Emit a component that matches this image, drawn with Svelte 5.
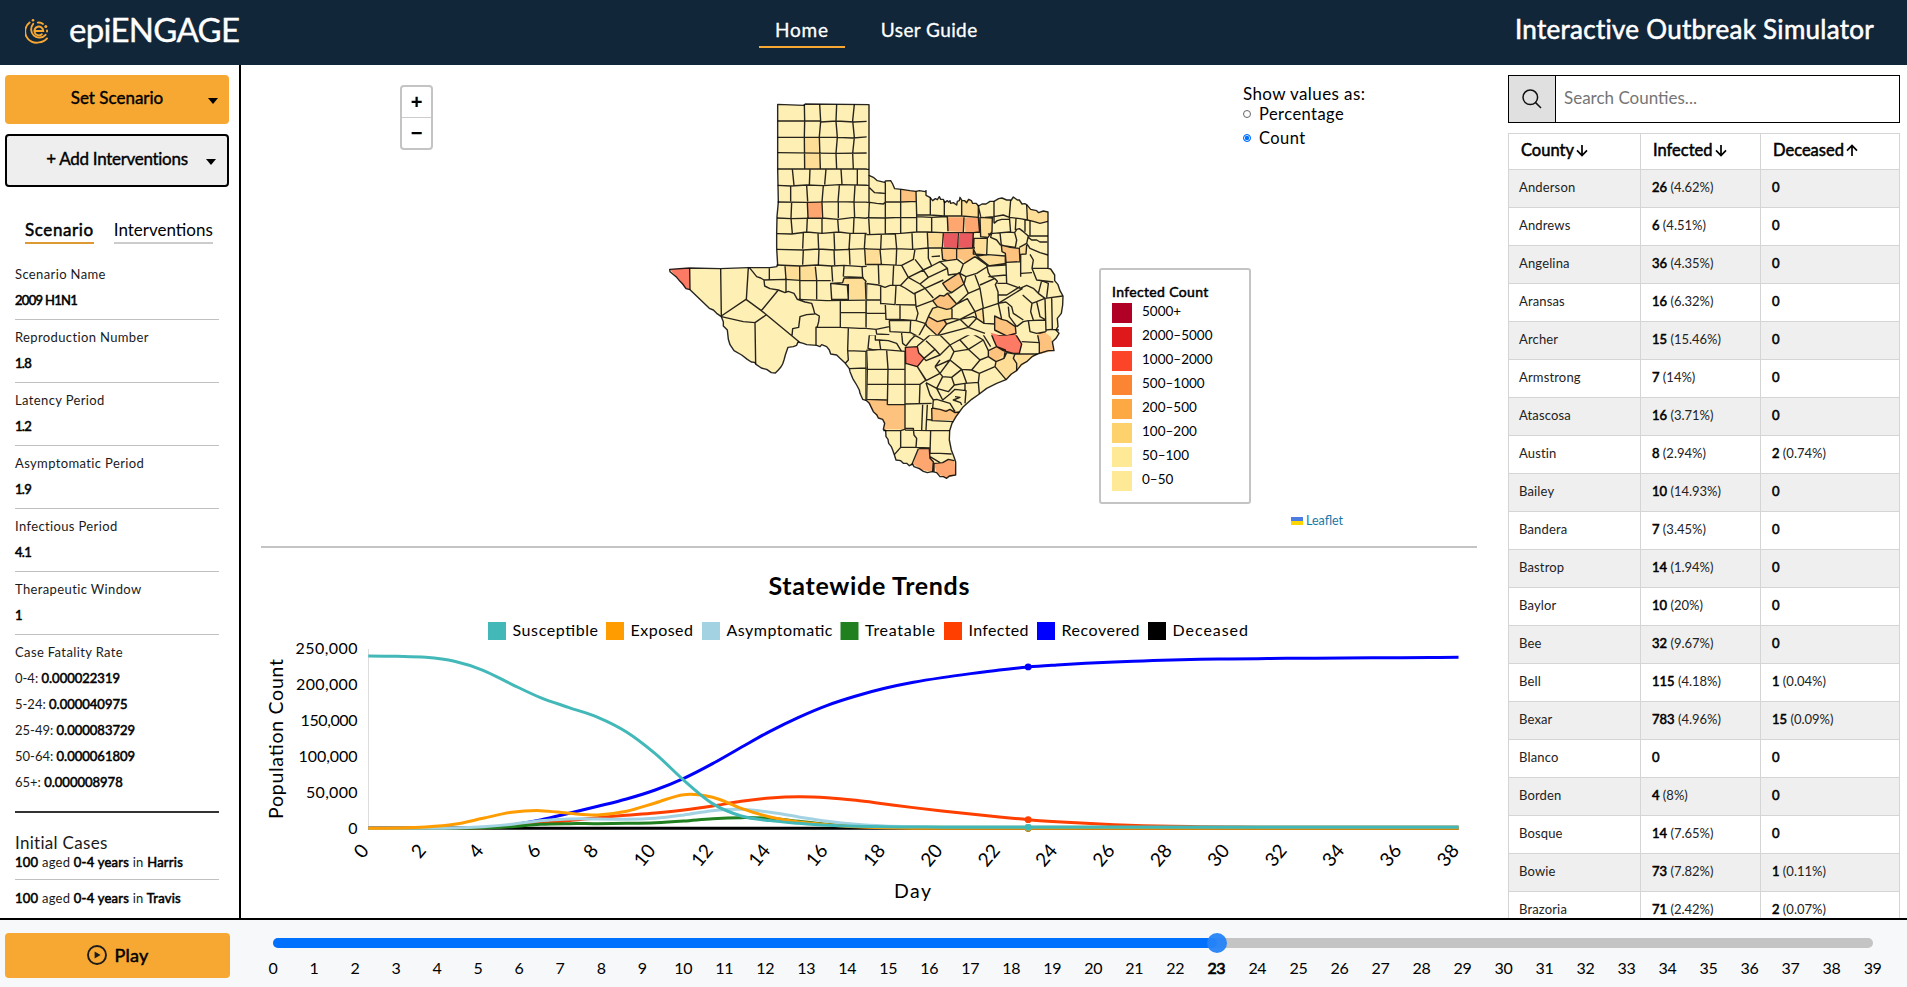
<script>
  const params = [
    ['Scenario Name', '2009 H1N1'],
    ['Reproduction Number', '1.8'],
    ['Latency Period', '1.2'],
    ['Asymptomatic Period', '1.9'],
    ['Infectious Period', '4.1'],
    ['Therapeutic Window', '1']
  ];
  const fatality = [
    ['0-4', '0.000022319'],
    ['5-24', '0.000040975'],
    ['25-49', '0.000083729'],
    ['50-64', '0.000061809'],
    ['65+', '0.000008978']
  ];
  const initial = ['Harris', 'Travis'];
  const counties = [
    ['Anderson', '26', '(4.62%)', '0', ''],
    ['Andrews', '6', '(4.51%)', '0', ''],
    ['Angelina', '36', '(4.35%)', '0', ''],
    ['Aransas', '16', '(6.32%)', '0', ''],
    ['Archer', '15', '(15.46%)', '0', ''],
    ['Armstrong', '7', '(14%)', '0', ''],
    ['Atascosa', '16', '(3.71%)', '0', ''],
    ['Austin', '8', '(2.94%)', '2', '(0.74%)'],
    ['Bailey', '10', '(14.93%)', '0', ''],
    ['Bandera', '7', '(3.45%)', '0', ''],
    ['Bastrop', '14', '(1.94%)', '0', ''],
    ['Baylor', '10', '(20%)', '0', ''],
    ['Bee', '32', '(9.67%)', '0', ''],
    ['Bell', '115', '(4.18%)', '1', '(0.04%)'],
    ['Bexar', '783', '(4.96%)', '15', '(0.09%)'],
    ['Blanco', '0', '', '0', ''],
    ['Borden', '4', '(8%)', '0', ''],
    ['Bosque', '14', '(7.65%)', '0', ''],
    ['Bowie', '73', '(7.82%)', '1', '(0.11%)'],
    ['Brazoria', '71', '(2.42%)', '2', '(0.07%)']
  ];
  const legend = [
    ['#b10026', '5000+'],
    ['#df181b', '2000–5000'],
    ['#fc4528', '1000–2000'],
    ['#fc8534', '500–1000'],
    ['#fda943', '200–500'],
    ['#fdd16c', '100–200'],
    ['#feea96', '50–100'],
    ['#feea96', '0–50']
  ];
  const days = Array.from({ length: 40 }, (_, i) => i);
  const today = 23;

  // State outline, in map units (three per pixel).
  const outline =
    'M353,43 L432,46 436,42 627,44 627,256 640,262 652,272 674,277 676,273 692,272 698,282 704,296 725,298 750,302 768,304 778,302 796,305 798,302 798,316 810,322 818,332 826,326 832,329 838,320 842,328 850,328 854,338 862,332 866,336 870,332 872,340 880,338 890,345 892,334 898,332 900,322 906,332 914,332 920,338 926,328 934,332 938,340 948,340 956,348 966,342 978,342 990,334 1002,334 1016,326 1026,324 1040,330 1054,330 1060,321 1072,330 1078,330 1086,342 1094,341 1100,344 1112,358 1130,362 1136,368 1150,363 1164,366 1164,535 1172,537 1184,555 1184,572 1194,584 1200,602 1209,618 1208,645 1204,670 1192,685 1194,710 1188,720 1197,730 1188,745 1177,755 1182,782 1165,782 1132,792 1116,800 1100,815 1084,824 1070,842 1054,852 1038,869 1010,880 980,895 958,912 935,928 910,950 898,966 888,980 876,1000 869,1022 868,1050 874,1080 881,1098 887,1115 887,1155 868,1158 860,1165 850,1160 840,1160 830,1148 817,1145 802,1148 790,1144 778,1136 762,1130 758,1122 748,1127 740,1120 730,1120 722,1112 708,1110 703,1094 698,1080 694,1070 686,1060 684,1048 678,1040 677,1022 670,1018 674,1000 668,988 655,984 650,974 640,965 628,940 620,932 608,928 600,910 598,900 590,885 582,872 578,865 570,845 568,836 556,820 540,805 530,795 512,792 508,780 500,770 485,764 480,770 470,766 440,764 430,760 414,756 410,766 400,770 384,772 376,795 372,810 368,822 362,832 355,840 346,849 334,848 320,838 304,834 288,823 284,817 274,816 262,808 245,795 222,782 210,764 205,748 202,720 190,708 190,695 184,680 170,670 160,660 148,655 90,599 78,596 68,582 60,574 50,562 30,545 29,538 88,534 180,536 265,533 330,533 350,530 353,525 350,475 350,430 351,380 355,336 353,237 Z';

  // Shaded counties: [colour, points]
  const shaded = [
    ['#fedd97', '434,142 478,142 480,188 434,188'],
    ['#fedd97', '434,189 480,189 480,236 434,236'],
    ['#fda66f', '442,337 486,337 484,383 444,383'],
    ['#fd7b65', '29,538 88,534 89,598 78,596 50,562'],
    ['#fedd97', '377,526 419,528 418,568 380,568'],
    ['#fedd97', '421,528 466,530 468,570 421,570'],
    ['#fedd97', '552,564 612,565 617,628 567,628 564,582 550,580'],
    ['#fdc27d', '725,298 750,302 768,304 768,334 725,334'],
    ['#fedd97', '906,332 926,328 938,340 955,348 955,382 905,378'],
    ['#fedd97', '1103,344 1112,358 1136,368 1150,363 1164,366 1164,394 1140,400 1120,394 1102,392'],
    ['#fda66f', '864,382 911,382 908,426 862,424'],
    ['#fda66f', '914,383 955,383 959,428 916,426'],
    ['#fedd97', '961,383 997,384 996,425 984,442 963,440'],
    ['#e85a5f', '851,430 892,430 892,474 852,472'],
    ['#e85a5f', '898,430 940,429 938,473 895,473'],
    ['#fedd97', '802,430 849,430 846,474 806,468'],
    ['#fdc27d', '847,476 889,476 888,508 862,512 845,506'],
    ['#fdc27d', '893,476 938,474 945,500 915,523 908,510 893,504'],
    ['#fedd97', '943,446 979,446 976,494 941,490'],
    ['#fedd97', '951,498 1036,498 1036,525 988,528 982,518'],
    ['#fdc27d', '1024,464 1044,474 1078,476 1080,514 1038,517 1037,490 1026,485'],
    ['#fedd97', '1083,472 1098,462 1104,476 1098,492 1082,492'],
    ['#fedd97', '615,478 658,478 658,524 617,524'],
    ['#fedd97', '600,570 614,580 616,626 600,626'],
    ['#fdc27d', '848,580 898,548 912,582 875,606 862,602'],
    ['#fdc27d', '818,632 840,616 852,618 862,610 876,624 888,640 872,656 860,658 832,650'],
    ['#fedd97', '806,670 818,652 840,652 876,664 878,682 862,696 850,690 832,692 810,676'],
    ['#fdc27d', '797,698 806,678 832,694 852,690 860,702 832,736 800,708'],
    ['#fedd97', '945,665 966,655 972,700 950,684'],
    ['#fdc27d', '1004,678 1026,688 1042,692 1065,712 1066,728 1038,736 1004,724'],
    ['#fd7b65', '992,728 1020,736 1038,736 1064,728 1086,762 1078,790 1060,790 1030,782 1010,770 1002,752'],
    ['#fdc27d', '985,782 1010,770 1036,780 1032,805 1008,815 985,800'],
    ['#fedd97', '1008,815 1034,790 1060,795 1070,810 1070,842 1038,869 1005,830'],
    ['#fedd97', '1065,792 1132,792 1100,815 1070,842 1072,812'],
    ['#fdc27d', '1132,730 1152,725 1172,740 1177,755 1182,782 1140,792 1138,758'],
    ['#fd7b65', '736,772 772,770 776,788 792,805 772,832 737,820'],
    ['#fdc27d', '620,930 680,930 682,944 734,945 734,1018 672,1018 672,990 655,984 640,965'],
    ['#fdc27d', '816,954 840,958 885,960 898,968 880,990 816,990'],
    ['#fda66f', '776,1076 808,1076 810,1098 820,1115 818,1145 785,1140 760,1122'],
    ['#fda66f', '822,1120 848,1118 865,1108 883,1112 887,1155 860,1165 830,1150']
  ];

  // County boundaries grouped by map tile: [clip id, clip rect, dx, dy, path]
  const borders = [
    ['nw', [0, 0, 620, 526], 0, 0, 'M353,93H480L482,96 530,93 581,96 627,94 M353,142L530,142 578,144 627,140 M353,188L530,190 627,189 M353,237L592,237 627,237 M433,43L434,92 433,142 434,237 M479,43L482,94 478,140 481,237 M530,43L528,94 532,142 528,190 530,237 M583,43L578,92 583,142 578,190 580,237 M397,237L402,286 M450,237L448,286 M498,237L494,284 M543,237L546,284 M592,237V284 M353,286L392,288 440,285 490,287 540,284 627,286 M392,287L392,334 M440,286L443,334 M490,287L486,336 M538,287L534,336 M585,286L582,336 M353,336L442,337 535,335 582,336 660,337 M395,336L393,384 M442,337L444,384 M486,337L488,384 M535,336V384 M582,336L584,384 M351,384L393,386 486,384 535,388 582,382 627,385 M393,384L397,431 M442,384L440,428 M486,384V430 M533,386L536,426 M582,384L580,430 M351,431L395,432 440,426 486,430 536,426 570,430 614,430 660,430 M430,430L428,476 M474,430L476,478 M522,430L524,478 M570,430L567,478 M616,430L613,476 M351,478L430,480 476,477 524,480 570,478 614,476 660,476 M430,480L428,524 M477,478L475,525 M522,478L524,525 M568,478L570,524 M614,477L617,525'],
    ['sw', [0, 522, 620, 660], 0, 450, 'M328,85V118 M375,78L378,118V155 M419,78L420,178 M466,80L470,120 470,178 M350,75L420,78 470,75 515,78 552,76 606,80 660,76 M515,78L518,125 M552,78L550,110 M606,78L608,115 M552,110L606,112 M310,120L375,118 420,121 512,122 M268,83L278,95 290,110 302,114 312,120 314,138 330,146 355,150 375,158 385,154 402,160 412,178 435,186 455,190 460,205 464,220 478,228 476,245 472,260 468,262V315 M415,178L500,182 640,180 M512,130L515,178 565,178 562,135 Z M512,130L548,128 552,114 612,114 M565,178V132 M616,125L618,178 M606,112L620,126 M89,85L90,149 M182,87L184,228 M265,83L259,178 M184,228L258,178 304,212 355,150 M304,212L418,306 M184,230L250,245 285,248 318,225 M285,248L287,373 M464,222L440,224 420,230 416,262 398,266 396,288 M466,262L541,262 600,265 660,265 M541,180V262 M541,218L618,218 660,219 M618,180V262 M565,265L563,330 565,360 556,370 M565,332L618,334 660,330 M618,334V482 M568,386L618,384 660,387'],
    ['ne', [619, 200, 620, 536], 600, 210, 'M0,28H27 M0,76H27 M27,82L44,98 60,99 74,100 M27,46V127 M28,127L26,173 29,222 M76,67V222 M122,88V222 M168,94L170,163V215 M0,127H30L50,130 70,132 76,126 122,126 168,124 M0,173L76,174 122,172 168,173 M170,165L211,165 252,168 305,168 355,172 M211,112V165 M253,122V168 M305,122V170 M355,135V172 M170,170L215,172 262,170 M215,170V215 M262,170L264,214 M312,172L310,216 M355,172L359,218 M360,172L397,174 396,215 384,232 362,230Z M0,222L27,224 76,222 122,220 170,216 202,216 250,218 340,218 360,216 M250,220L247,264 M295,220L293,264 M340,219L338,262 M202,218L204,262 M64,222L62,266 M106,222L110,266 M156,220L158,266 M0,266L62,268 108,266 158,268 205,264 247,264 295,266 345,264 M342,235H382L380,285 340,282 Z M338,262L350,288 M350,288L384,284 436,288 436,315 388,318 352,290 M424,255L450,262 478,265 480,305 438,307 436,280 426,275Z M60,268L64,312 M110,268L108,316 M0,314L60,313 125,316 M55,316L57,372 M101,316L98,378 M402,124V170L402,190 M452,120L448,170 452,218 M500,134L502,178 M355,138L362,170 M375,172L402,170 430,165 448,172 480,176 502,180 520,184 540,190 564,184 M402,190L412,182 425,178 448,178 M468,175L466,210 M495,178V215 M510,184V226 M384,222L400,220 448,216 464,218 470,208 478,206 490,215 505,228 564,228 M396,215L392,232 410,240 422,256 M420,218L424,256 M464,218L470,240 466,262 426,256 M505,228L500,250 478,262 M505,232L515,240 530,240 540,246 562,246 M500,250L510,265 540,278 564,285 M500,255L498,282 482,283 V350 M510,283L520,300 516,325 530,360 580,366 M484,340L516,338 M516,325H564 M245,266L248,298 262,302 M290,266V298L262,302 M292,298L310,312 345,290 M165,268L160,298 125,316 145,352 190,330 165,298 M145,352L120,378 M145,352L180,372 205,352 190,330 M190,330L215,318 205,295 205,265 M215,318L240,305 262,302 M205,352L262,325 M240,305L262,325 265,345 300,340 310,312 M215,290L240,288 M300,340L318,350 350,340 M180,372L195,385 250,360 M160,402L195,385 220,414 M248,370L298,338 312,372 275,398 262,390 Z M318,350L312,372 325,400 360,385 345,345 M360,375L405,355 M345,290L380,315 385,338 392,350 405,356 412,364 406,374 414,395 415,430 M350,340L385,318 438,310 440,370 480,385 M412,370L440,370 M385,350L438,345 M165,400L168,440 174,460 168,482 M218,422L240,406 252,408 262,400 290,432 272,446 260,448 232,440Z M170,440L218,422 M262,400L275,398 M290,432L325,400 M360,385L370,445 M290,432L322,416 345,455 300,478 M205,470L218,445 235,440 M278,475L250,480 M276,446V475L300,478 M197,490L205,470 232,485 252,480 260,492 232,527 200,498Z M345,455L368,445 372,490 350,475Z M370,445L415,430 414,405 440,405 480,380 M415,430L488,385 M438,426L455,440 460,460 490,480 M480,385L500,376 520,385 535,400 555,415 M545,362L535,400 M545,362L565,370 560,412 M555,415L558,515 M575,412L577,508 M555,415L608,408 M488,405L516,430 530,425 555,415 M516,430L512,455 520,480 M530,425L540,470 558,480 M505,482L510,515 530,520 558,515 M505,482L556,480 M470,500L490,485 505,482 M445,440L448,470 470,500 M538,520L558,515 M558,510L575,508 597,510 M372,490L404,492 M404,468L425,478 440,482 466,500 468,520 440,528 404,510 Z M438,426L415,430 425,478 M0,368L55,375 75,382 90,376 120,376 135,384 160,400 M20,370L18,505 M0,420H62L62,380 M62,430L105,434 108,378 M108,434L168,435 M76,435L78,478 M120,436V478 M62,420V433 M16,460L78,460 M76,478L120,478 168,482 M88,482L90,515 150,518 152,482Z M18,505L48,508 88,500 M48,508L50,522 88,524 M125,518V545 M168,482L195,490 M152,518L175,530 197,490 M260,492L300,478 M300,478L340,470 350,475 M300,478L325,502 M350,475L325,502 375,520 M232,527L325,502'],
    ['se', [619, 736, 620, 460], 540, 690, 'M78,22L110,25 110,35 150,38 M80,92L82,146 80,240 M22,92L90,90 122,88 195,94 M140,92L144,146 142,254 M28,146L80,148 195,148 M80,193L195,193 M80,238L140,240 M195,92V330 M142,254H195 M195,252L275,250 M88,45L84,85 100,90 122,88 118,60 106,60 106,44Z M118,60L145,62 170,70 185,95 M153,36L210,40 M185,40L188,70 198,78 M232,40L212,60 198,78 M196,82L232,80 236,98 252,115 232,140 197,130Z M210,40L232,50 250,60 M232,78L270,45 M195,193L240,193 258,180 232,140 M240,193L238,252 M258,188L270,225 280,240 M248,254L245,330 M262,254L258,330 M258,298L275,300 M275,264L276,302 340,305 M276,264L300,268 318,274 330,268 345,278 358,276 M194,328L182,332H130 M195,330L270,332H330 M272,332L270,400 300,400 335,402 M182,332L182,382 228,382 270,384 M195,325H220L222,345 230,355 228,382 M182,382L163,404 M235,386L215,435 M236,386H268L270,415 280,425 278,455 M282,455V430L308,428 325,418 343,422 M270,410L300,428 M280,240L290,238 310,244 330,250 345,275 M280,240L278,264 M258,188L290,205 308,240 M290,205L308,170 335,172 343,195 325,215 290,205 M308,240L330,222 345,208 378,212 375,250 M345,230L360,232 340,240 362,248 365,255 M343,195L375,190 415,187 418,222 M375,190V212 M252,115L285,88 258,62 M285,88L300,105 330,75 300,45 M232,140L258,182 300,160 285,140 M252,115L258,122 300,105 M300,120L285,140 M285,140L330,120 M308,170L300,160 330,120 365,148 335,172 M330,75L342,95 330,120 M342,95L385,88 420,120 395,150 365,148 M385,88L360,60 M365,148L380,190 M395,150L418,160 415,187 M418,160L465,140 M420,120L445,110 M330,75L395,40 M395,40L430,60 445,92 M385,88L430,60 M452,38L480,46 498,45 524,38 545,72 538,100 520,100 490,92 470,80 462,62Z M445,92L470,80 496,90 492,115 468,125 445,110Z M468,125L465,140 498,179 M492,115L500,98 525,102 520,115 530,130V152 M525,102L592,102 M545,65L598,68V100 M592,40L598,70 M430,45L452,80 M270,45L300,45']
  ];

  // Chart geometry and series, sampled once per day.
  const X0 = 368.3;
  const STEP = 28.69;
  const base = 805;
  const pad = (a, last) => Array.from({ length: 39 }, (_, i) => (i < a.length ? a[i] : last));
  const series = [
    ['Deceased', '#000000', pad([], 805)],
    ['Recovered', '#0000ff', pad([805, 805, 805, 805, 804, 795, 780, 760, 739, 717, 690, 655, 611, 562, 514, 472, 436, 408, 385, 367, 353, 341, 330, 321, 315, 310, 306, 303, 300, 298, 297, 296, 295, 294.5, 294, 293.5, 293, 292.5, 292], 292)],
    ['Infected', '#ff3f00', pad([805, 805, 805, 805, 804, 798, 790, 782, 773, 766, 759, 750, 738, 724, 714, 710, 713, 721, 732, 743, 753, 762, 771, 779, 785, 790, 794, 797, 799, 800, 801], 802)],
    ['Treatable', '#208020', pad([805, 805, 805, 805, 804, 800, 793, 791, 791, 790, 788, 783, 776, 773, 775, 784, 793, 799, 801], 802)],
    ['Asymptomatic', '#a3d3e2', pad([805, 805, 805, 804, 800, 793, 782, 777, 777, 778, 775, 765, 752, 748, 757, 771, 784, 793, 798, 800], 802)],
    ['Exposed', '#ff9c00', pad([805, 804, 801, 793, 775, 757, 752, 760, 765, 754, 729, 704, 712, 745, 771, 786, 794, 800, 803, 804.5], 805)],
    ['Susceptible', '#43b8b8', pad([288, 289, 292, 304, 331, 373, 413, 443, 472, 516, 581, 661, 731, 768, 782, 790, 796, 799, 800.5, 801], 802)]
  ];
  const px = (d) => X0 + d * STEP;
  const py = (v) => 828.3 - (base - v) / 3;
  function curve(vals) {
    let d = `M${px(0)},${py(vals[0])}`;
    for (let i = 0; i < vals.length - 1; i++) {
      const a = vals[Math.max(0, i - 1)];
      const b = vals[i];
      const c = vals[i + 1];
      const e = vals[Math.min(vals.length - 1, i + 2)];
      d += ` C${px(i + 1 / 3)},${py(b + (c - a) / 6)} ${px(i + 2 / 3)},${py(c - (e - b) / 6)} ${px(i + 1)},${py(c)}`;
    }
    return d;
  }
  const chartLegend = [
    [488, 'Susceptible', '#43b8b8', 85.5],
    [606, 'Exposed', '#ff9c00', 62.5],
    [702, 'Asymptomatic', '#a3d3e2', 106],
    [840.5, 'Treatable', '#208020', 70],
    [944, 'Infected', '#ff3f00', 60],
    [1037, 'Recovered', '#0000ff', 78],
    [1148, 'Deceased', '#000000', 75.5]
  ];
  const yTicks = [
    ['250,000', 62],
    ['200,000', 61.5],
    ['150,000', 57],
    ['100,000', 59],
    ['50,000', 51.5],
    ['0', 9.5]
  ];
  const xTicks = Array.from({ length: 20 }, (_, i) => i * 2);
</script>

<div class="app">
  <header>
    <div class="brand">
      <svg width="24" height="26" viewBox="0 0 24 26" fill="none" stroke="#f6a833" stroke-width="1.9" stroke-linecap="round">
        <path d="M4.6,4.6 A11.2,11.2 0 0 0 14,24.4 Q19,24 22,20.4" />
        <path d="M8.2,5.8 A8.2,8.2 0 1 0 20.6,16.8" />
        <path d="M12.8,4.6 Q15.8,4.2 18,6" />
        <path d="M10,12.9 H18.2 A4.4,4.4 0 1 0 16.8,16.2" stroke-width="2" />
        <circle cx="8" cy="2.2" r="1.3" fill="#f6a833" stroke="none" />
        <circle cx="20.8" cy="8.4" r="1.5" fill="#f6a833" stroke="none" />
        <path d="M22,12.4 V13.6" />
      </svg>
      <span class="name">epiENGAGE</span>
    </div>
    <nav>
      <a class="on" href="#home">Home</a>
      <a href="#guide">User Guide</a>
    </nav>
    <div class="title">Interactive Outbreak Simulator</div>
  </header>

  <div class="body">
    <aside class="left">
      <button class="menu primary"><span>Set Scenario</span><i></i></button>
      <button class="menu secondary"><span>+ Add Interventions</span><i></i></button>
      <div class="tabs">
        <span class="tab on">Scenario</span>
        <span class="tab">Interventions</span>
      </div>
      <div class="info">
        {#each params as [label, value]}
          <div class="param"><div>{label}</div><b>{value}</b></div>
        {/each}
        <div class="fatal">
          <div class="fatal-title">Case Fatality Rate</div>
          {#each fatality as [age, rate]}
            <div>{age}: <b>{rate}</b></div>
          {/each}
        </div>
        <div class="cases-title">Initial Cases</div>
        {#each initial as place}
          <div class="case"><b>100</b> aged <b>0-4 years</b> in <b>{place}</b></div>
        {/each}
      </div>
    </aside>

    <main>
      <section class="map">
        <svg class="texas" width="402" height="396" viewBox="0 0 1206 1188">
          <defs>
            {#each borders as [id, [x, y, w, h]]}
              <clipPath {id}><rect {x} {y} width={w} height={h} /></clipPath>
            {/each}
          </defs>
          <g class="lines">
            <path d={outline} fill="#feefb5" stroke="none" />
            {#each shaded as [color, pts]}
              <polygon points={pts} fill={color} stroke="none" />
            {/each}
            {#each borders as [id, , dx, dy, d]}
              <g clip-path="url(#{id})"><path transform="translate({dx} {dy})" {d} /></g>
            {/each}
            <path d={outline} />
          </g>
        </svg>
        <div class="zoom"><span>+</span><span>−</span></div>
        <div class="mode">
          <div class="mode-title">Show values as:</div>
          <label><i></i>Percentage</label>
          <label><i class="on"></i>Count</label>
        </div>
        <div class="legend">
          <div class="legend-title">Infected Count</div>
          {#each legend as [color, text]}
            <div class="key"><i style="background:{color}"></i><span>{text}</span></div>
          {/each}
        </div>
        <div class="credit"><i></i>Leaflet</div>
      </section>

      <section class="chart">
        <svg width="1247" height="370" viewBox="241 548 1247 370">
          <text x="869" y="595" class="chart-title" text-anchor="middle" textLength="201">Statewide Trends</text>
          {#each chartLegend as [x, label, color, w]}
            <rect {x} y="622" width="18" height="18" fill={color} />
            <text x={x + 24.5} y="635.5" font-size="16" textLength={w}>{label}</text>
          {/each}
          {#each yTicks as [label, w], i}
            <text x="357.5" y={653.7 + i * 36} font-size="16" text-anchor="end" textLength={w}>{label}</text>
          {/each}
          <path d="M368.5,649V829" stroke="#ddd" />
          {#each series as [, color, vals]}
            <path d={curve(vals)} fill="none" stroke={color} stroke-width="3" />
            <circle cx={px(today)} cy={py(vals[today])} r="3.4" fill={color} />
          {/each}
          {#each xTicks as t}
            <text transform="translate({px(t) + 1.5} {851}) rotate(-50)" font-size="19" text-anchor="end">{t}</text>
          {/each}
          <text x="912.5" y="898" font-size="19.5" text-anchor="middle" textLength="37">Day</text>
          <text transform="translate(282.5 819) rotate(-90)" font-size="19.5" textLength="160">Population Count</text>
        </svg>
      </section>
    </main>

    <aside class="right">
      <div class="search">
        <div class="glass">
          <svg width="20" height="20" viewBox="0 0 20 20" fill="none" stroke="#111" stroke-width="1.5">
            <circle cx="8.3" cy="8.3" r="7.3" /><path d="M13.6,13.6 L19,19" />
          </svg>
        </div>
        <div class="placeholder">Search Counties...</div>
      </div>
      <div class="table">
        <div class="row head">
          {#each ['County', 'Infected', 'Deceased'] as h, i}
            <div>
              {h}<svg width="12" height="13" viewBox="0 0 12 13" fill="none" stroke="#000" stroke-width="1.7">
                <path d={i < 2 ? 'M6,1V11.5M1,6.4L6,11.5 11,6.4' : 'M6,12V1.5M1,6.6L6,1.5 11,6.6'} />
              </svg>
            </div>
          {/each}
        </div>
        {#each counties as [name, inf, infPct, dead, deadPct]}
          <div class="row">
            <div>{name}</div>
            <div><b>{inf}</b> {infPct}</div>
            <div><b>{dead}</b> {deadPct}</div>
          </div>
        {/each}
      </div>
    </aside>
  </div>

  <footer>
    <button class="play">
      <svg width="20" height="20" viewBox="0 0 20 20"><circle cx="10" cy="10" r="9" fill="none" stroke="#1c1c1c" stroke-width="1.9" /><path d="M7.6,6.4V13.6L13.6,10Z" fill="#1c1c1c" /></svg>
      <span>Play</span>
    </button>
    <div class="timeline">
      <div class="track">
        <div class="fill" style="width:{(today / 39) * 100}%"></div>
        <div class="thumb" style="left:{(today / 39) * 100}%"></div>
      </div>
      <div class="ticks">
        {#each days as d}
          <span class:now={d === today}>{d}</span>
        {/each}
      </div>
    </div>
  </footer>
</div>

<style>
  :global(body) { margin: 0; background: #fff; overflow: hidden; }
  .app {
    width: 1907px; height: 987px; display: flex; flex-direction: column; overflow: hidden;
    font-family: Lato, "Open Sans", sans-serif; color: #000;
  }
  .app * { box-sizing: border-box; }
  b { font-weight: 400; -webkit-text-stroke: 0.55px #000; color: #000; }
  button { font-family: inherit; color: #000; padding: 0; border: 0; }
  header {
    height: 65px; flex: none; background: #12263a; color: #fff; display: grid;
    grid-template-columns: 759px 300px 1fr; align-items: center;
  }
  .brand { display: flex; align-items: center; padding-left: 25px; gap: 20px; height: 65px; }
  .brand svg { margin-top: -4px; }
  .name { font-size: 33px; letter-spacing: -0.7px; -webkit-text-stroke: 0.35px #fff; line-height: 40px; margin-top: -8px; }
  nav { display: flex; gap: 20px; margin-top: -4px; }
  nav a {
    color: #fff; text-decoration: none; font-size: 19px; letter-spacing: 0.4px; line-height: 24px; height: 34px; padding: 4px 16px 0;
    border-bottom: 2px solid transparent; -webkit-text-stroke: 0.3px #fff; white-space: nowrap;
  }
  nav a.on { border-color: #f6a833; letter-spacing: 0.8px; }
  .title { text-align: right; padding-right: 33px; font-size: 26px; letter-spacing: 0.27px; -webkit-text-stroke: 0.55px #fff; margin-top: -8px; white-space: nowrap; }

  .body { flex: none; height: 853px; display: grid; grid-template-columns: 241px 1247px 1fr; overflow: hidden; }
  .left { border-right: 2px solid #000; padding: 10px 10px 0 5px; overflow: hidden; }
  .menu { display: flex; width: 224px; border-radius: 4px; font-size: 17px; position: relative; justify-content: center; align-items: flex-start; -webkit-text-stroke: 0.4px #000; }
  .menu span { line-height: 22px; }
  .menu i { position: absolute; right: 11px; top: 23px; border: 5.5px solid transparent; border-top: 6px solid #000; border-bottom: 0; }
  .primary { height: 49px; background: #f6a833; padding-top: 12px; }
  .secondary { height: 53px; margin-top: 10px; background: #eee; border: 2px solid #000; padding-top: 12px; letter-spacing: -0.3px; }
  .tabs { display: flex; gap: 20px; margin: 32px 0 0 20px; }
  .tab { font-size: 17px; line-height: 22px; height: 25px; border-bottom: 2px solid #ccc; white-space: nowrap; }
  .tab.on { -webkit-text-stroke: 0.5px #000; border-color: #dd9a33; letter-spacing: 0.6px; }
  .info { width: 204px; margin: 11px 0 0 10px; font-size: 13px; line-height: 26px; color: #1a1a1a; white-space: nowrap; }
  .param { height: 63px; border-bottom: 1px solid #c0c0c0; padding-top: 4px; }
  .param div, .fatal-title { letter-spacing: 0.37px; }
  .param b { letter-spacing: -0.7px; }
  .param:first-child { height: 65px; padding-top: 6px; }
  .fatal { height: 178px; padding-top: 4px; border-bottom: 2px solid #333; }
  .cases-title { font-size: 17px; line-height: 20px; margin-top: 20px; letter-spacing: 0.3px; }
  .case { height: 27px; line-height: 18px; font-size: 13px; border-bottom: 1px solid #c0c0c0; letter-spacing: 0.25px; }
  .case + .case { border: 0; height: 35px; padding-top: 9px; }

  main { display: flex; flex-direction: column; }
  .map { height: 483px; margin: 0 11px 0 20px; border-bottom: 2px solid #c4c4c4; position: relative; }
  .texas { position: absolute; left: 399px; top: 25px; overflow: visible; }
  .lines { fill: none; stroke: #000; stroke-opacity: 0.85; stroke-width: 4.2; stroke-linejoin: round; }
  .zoom { position: absolute; left: 139px; top: 20px; width: 33px; height: 65px; border: 2px solid #c4c4c4; border-radius: 4px; display: flex; flex-direction: column; }
  .zoom span { height: 31px; text-align: center; font: bold 20px/31px "Liberation Sans", sans-serif; }
  .zoom span:first-child { border-bottom: 1px solid #ccc; }
  .mode { position: absolute; left: 982px; top: 18px; font-size: 17px; }
  .mode-title { line-height: 21px; letter-spacing: 0.4px; }
  .mode label { display: flex; align-items: center; height: 20px; margin-bottom: 4px; gap: 8px; line-height: 20px; font-size: 16.5px; letter-spacing: 0.45px; }
  .mode label i { width: 8px; height: 8px; border: 1px solid #666; border-radius: 50%; }
  .mode label i.on { border-color: #0070ff; background: #0070ff; box-shadow: inset 0 0 0 0.8px #fff; }
  .legend { position: absolute; left: 838px; top: 203px; width: 152px; height: 236px; border: 2px solid #c4c4c4; border-radius: 3px; padding: 13px 0 0 11px; background: #fff; }
  .legend-title { font-size: 14px; line-height: 18px; margin-bottom: 2px; letter-spacing: 0.35px; -webkit-text-stroke: 0.5px #000; }
  .key { display: flex; gap: 10px; height: 24px; font-size: 13.5px; line-height: 17px; }
  .key i { width: 20px; height: 20px; }
  .credit { position: absolute; left: 1030px; top: 448px; display: flex; align-items: center; gap: 3px; font-size: 12.5px; line-height: 16px; color: #1878a8; }
  .credit i { width: 12px; height: 8px; background: linear-gradient(#4c7be1 50%, #ffd500 50%); }

  .chart { height: 370px; }
  .chart svg { display: block; }
  .chart-title { font-size: 25px; font-weight: 700; }

  .right { padding: 10px 7px 0 20px; overflow: hidden; }
  .search { width: 392px; height: 48px; border: 1px solid #000; display: flex; }
  .glass { width: 47px; border-right: 1px solid #000; background: #e0e0e0; display: grid; place-items: center; }
  .placeholder { padding-left: 8px; font-size: 17px; line-height: 44px; color: #757575; }
  .table { margin-top: 10px; width: 392px; border-left: 1px solid #d5d5d5; border-top: 1px solid #d5d5d5; }
  .row { display: grid; grid-template-columns: 132px 120px 139px; height: 38px; font-size: 13px; line-height: 35px; color: #222; white-space: nowrap; }
  .row div { border-right: 1px solid #d5d5d5; border-bottom: 1px solid #d5d5d5; padding-left: 11px; }
  .row div:first-child { padding-left: 10px; letter-spacing: 0.15px; }
  .row:nth-child(even) div { background: #efefef; }
  .row.head { height: 36px; line-height: 32px; font-size: 16.5px; color: #000; -webkit-text-stroke: 0.5px #000; }
  .row.head div { padding-left: 12px; letter-spacing: 0; }
  .row.head svg { margin-left: 2px; vertical-align: -1px; }

  footer { flex: none; height: 69px; border-top: 2px solid #000; background: #f7f8fa; display: flex; }
  .play { width: 225px; height: 45px; margin: 13px 0 0 5px; background: #f6a833; border-radius: 4px; display: flex; justify-content: center; gap: 8px; padding-top: 12px; font-size: 18px; letter-spacing: 0.2px; -webkit-text-stroke: 0.5px #000; }
  .play span { line-height: 20px; }
  .timeline { width: 1600px; margin: 18px 0 0 43px; }
  .track { height: 10px; border-radius: 5px; background: #c4c4c4; position: relative; }
  .fill { height: 10px; border-radius: 5px; background: #0070ff; }
  .thumb { position: absolute; top: -5px; width: 20px; height: 20px; margin-left: -10px; border-radius: 50%; background: #2583f8; opacity: 0.95; }
  .ticks { display: flex; justify-content: space-between; margin: 10px -20px 0; font-size: 16px; line-height: 20px; }
  .ticks span { width: 40px; text-align: center; letter-spacing: -0.3px; }
  .ticks .now { -webkit-text-stroke: 0.7px #000; }
</style>
